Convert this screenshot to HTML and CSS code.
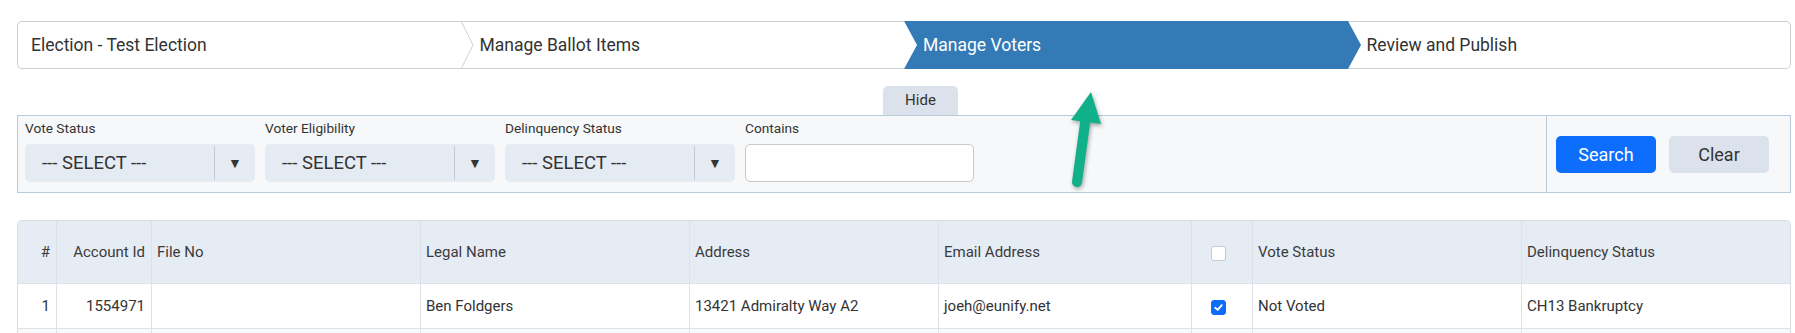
FILE: index.html
```html
<!DOCTYPE html>
<html lang="en">

<head>
    <meta charset="UTF-8">
    <title>Manage Voters</title>
    <link rel="stylesheet" href="styles.css">
</head>

<body>
    <!-- Wizard steps -->
    <div class="wizard">
        <div class="step first">
            <span>Election - Test Election</span>
            <svg class="chev" viewBox="0 0 13 48" preserveAspectRatio="none">
                <path d="M0 0 L12.5 24 L0 48 Z" fill="#fff" />
                <path d="M0 0 L12 24 L0 48" fill="none" stroke="#cfcfcf" stroke-width="1" />
            </svg>
        </div>
        <div class="step">
            <span>Manage Ballot Items</span>
            <svg class="chev" viewBox="0 0 13 48" preserveAspectRatio="none">
                <path d="M0 0 L13 24 L0 48 Z" fill="#fff" />
            </svg>
        </div>
        <div class="step active">
            <span>Manage Voters</span>
            <svg class="chev" viewBox="0 0 13 48" preserveAspectRatio="none">
                <path d="M0 0 L13 24 L0 48 Z" fill="#337ab7" />
            </svg>
        </div>
        <div class="step last">
            <span>Review and Publish</span>
        </div>
    </div>

    <div class="tab-row">
        <div class="hide-tab">Hide</div>
    </div>

    <!-- Filters -->
    <div class="filter-panel">
        <div class="filters">
            <div class="field">
                <label>Vote Status</label>
                <div class="select">
                    <span class="select-text">--- SELECT ---</span>
                    <span class="select-arrow">&#9660;</span>
                </div>
            </div>
            <div class="field">
                <label>Voter Eligibility</label>
                <div class="select">
                    <span class="select-text">--- SELECT ---</span>
                    <span class="select-arrow">&#9660;</span>
                </div>
            </div>
            <div class="field">
                <label>Delinquency Status</label>
                <div class="select">
                    <span class="select-text">--- SELECT ---</span>
                    <span class="select-arrow">&#9660;</span>
                </div>
            </div>
            <div class="field">
                <label>Contains</label>
                <input type="text" class="text-input" />
            </div>
        </div>
        <div class="actions">
            <button class="btn btn-search">Search</button>
            <button class="btn btn-clear">Clear</button>
        </div>
    </div>

    <!-- Voters table -->
    <div class="grid">
        <table>
            <colgroup>
                <col style="width:38px">
                <col style="width:95px">
                <col style="width:269px">
                <col style="width:269px">
                <col style="width:249px">
                <col style="width:253px">
                <col style="width:61px">
                <col style="width:269px">
                <col style="width:269px">
            </colgroup>
            <thead>
                <tr>
                    <th class="num">#</th>
                    <th class="num">Account Id</th>
                    <th>File No</th>
                    <th>Legal Name</th>
                    <th>Address</th>
                    <th>Email Address</th>
                    <th class="check"><span class="cb"></span></th>
                    <th>Vote Status</th>
                    <th>Delinquency Status</th>
                </tr>
            </thead>
            <tbody>
                <tr>
                    <td class="num">1</td>
                    <td class="num">1554971</td>
                    <td></td>
                    <td>Ben Foldgers</td>
                    <td>13421 Admiralty Way A2</td>
                    <td>joeh@eunify.net</td>
                    <td class="check">
                        <span class="cb checked">
                            <svg viewBox="0 0 16 16">
                                <path d="M4 8.3 L7 11 L12 5" fill="none" stroke="#fff" stroke-width="2.2"
                                    stroke-linecap="round" stroke-linejoin="round" />
                            </svg>
                        </span>
                    </td>
                    <td>Not Voted</td>
                    <td>CH13 Bankruptcy</td>
                </tr>
                <tr class="stripe">
                    <td></td><td></td><td></td><td></td><td></td><td></td><td></td><td></td><td></td>
                </tr>
            </tbody>
        </table>
    </div>

    <!-- annotation arrow -->
    <svg class="pointer" width="50" height="110" viewBox="1060 85 50 110">
        <line x1="1086" y1="116" x2="1077" y2="182" stroke="#10b08b" stroke-width="10" stroke-linecap="round" />
        <polygon points="1091,92 1071,120 1101,124" fill="#10b08b" />
    </svg>
</body>

</html>
```

FILE: styles.css
```css
body {
    font-family: Roboto, "Liberation Sans", sans-serif;
    margin: 0;
    padding: 21px 4px 0 17px;
    color: #333;
    background-color: #fff;
}

/* wizard */
.wizard {
    display: flex;
    height: 48px;
}

.step {
    position: relative;
    flex: 0 0 25%;
    box-sizing: border-box;
    display: flex;
    align-items: center;
    padding-left: 19px;
    border-top: 1px solid #cfcfcf;
    border-bottom: 1px solid #cfcfcf;
    background-color: #fff;
    font-size: 17.5px;
    color: #333;
}

.step.first {
    padding-left: 13px;
    border-left: 1px solid #cfcfcf;
    border-radius: 5px 0 0 5px;
}

.step.last {
    padding-left: 19px;
    border-right: 1px solid #cfcfcf;
    border-radius: 0 5px 5px 0;
}

.step.active {
    background-color: #337ab7;
    border-color: #337ab7;
    color: #fff;
}

.chev {
    position: absolute;
    left: 100%;
    top: -1px;
    width: 13px;
    height: 48px;
    z-index: 2;
}

/* hide tab */
.tab-row {
    margin-top: 17px;
    height: 29px;
}

.hide-tab {
    margin-left: 866px;
    width: 75px;
    height: 29px;
    line-height: 29px;
    text-align: center;
    font-size: 15px;
    background-color: #dbe2ec;
    border-radius: 5px 5px 0 0;
}

/* filters */
.filter-panel {
    display: flex;
    height: 78px;
    box-sizing: border-box;
    border: 1px solid #b9cadb;
    background-color: #f6f8fa;
}

.filters {
    flex: 1;
    display: flex;
    gap: 10px;
    padding: 2px 0 0 7px;
}

.field {
    display: flex;
    flex-direction: column;
    width: 230px;
}

.field label {
    font-size: 13.7px;
    line-height: 20px;
    margin-bottom: 6px;
}

.select {
    display: flex;
    height: 38px;
    background-color: #e4ebf3;
    border-radius: 5px;
}

.select-text {
    flex: 1;
    padding-left: 17px;
    line-height: 38px;
    font-size: 18.5px;
}

.select-arrow {
    width: 40px;
    margin: 2px 0;
    border-left: 1px solid #c3cad3;
    text-align: center;
    line-height: 34px;
    font-size: 14px;
    color: #333;
}

.text-input {
    height: 38px;
    width: 229px;
    box-sizing: border-box;
    border: 1px solid #c8c8c8;
    border-radius: 5px;
    background-color: #fff;
}

.actions {
    width: 244px;
    box-sizing: border-box;
    display: flex;
    align-items: center;
    gap: 13px;
    padding-left: 9px;
    border-left: 1px solid #b9cadb;
}

.btn {
    width: 100px;
    height: 37px;
    border: none;
    border-radius: 5px;
    font-family: Roboto, "Liberation Sans", sans-serif;
    font-size: 18px;
}

.btn-search {
    background-color: #0d6efd;
    color: #fff;
}

.btn-clear {
    background-color: #dbe2ec;
    color: #333;
}

/* table */
.grid {
    margin-top: 27px;
    border: 1px solid #d9dee4;
    border-bottom: none;
    border-radius: 5px 5px 0 0;
    overflow: hidden;
}

table {
    width: 100%;
    table-layout: fixed;
    border-collapse: separate;
    border-spacing: 0;
    font-size: 15px;
}

th,
td {
    padding: 0 5px;
    text-align: left;
    border-left: 1px solid #dde2e8;
    white-space: nowrap;
    overflow: hidden;
}

th:first-child,
td:first-child {
    border-left: none;
}

th {
    height: 62px;
    font-weight: normal;
    color: #3b3b3b;
    background-color: #e6ecf4;
    border-bottom: 1px solid #dde2e8;
}

td {
    height: 44px;
    border-bottom: 1px solid #e2e2e2;
    color: #333;
}

th.num,
td.num {
    text-align: right;
    padding-right: 6px;
}

th.check,
td.check {
    text-align: center;
    padding: 0;
}

.stripe td {
    background-color: #f8f9fa;
}

.cb {
    display: inline-block;
    width: 15px;
    height: 15px;
    box-sizing: border-box;
    border: 1px solid #c5cad1;
    border-radius: 3px;
    background-color: #fff;
    vertical-align: middle;
    position: relative;
    left: -4px;
}

.cb.checked {
    background-color: #0d6efd;
    border-color: #0d6efd;
}

.cb svg {
    display: block;
    width: 13px;
    height: 13px;
}

/* annotation */
.pointer {
    position: absolute;
    left: 1060px;
    top: 85px;
    filter: drop-shadow(1px 2px 2px rgba(0, 0, 0, 0.35));
}
```
